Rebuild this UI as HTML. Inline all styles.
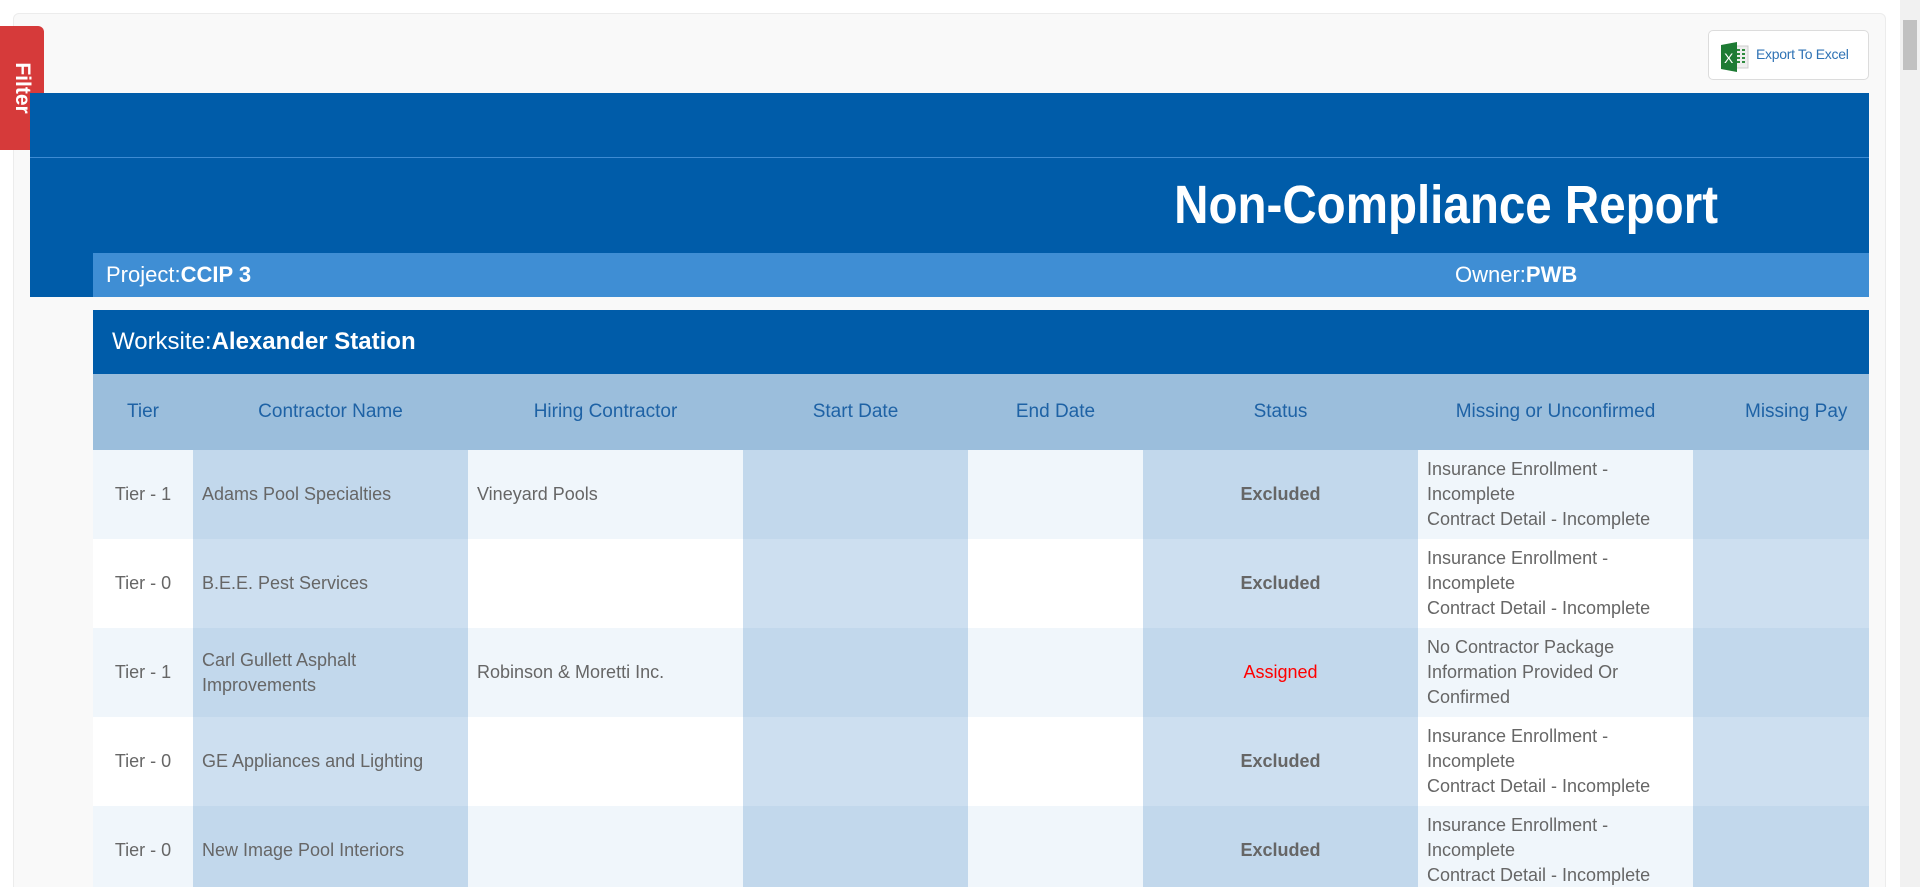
<!DOCTYPE html>
<html><head><meta charset="utf-8"><style>
*{box-sizing:border-box;margin:0;padding:0}
html,body{width:1920px;height:887px;overflow:hidden;background:#fff;font-family:"Liberation Sans",sans-serif}
.wrap{position:relative;width:1920px;height:887px;overflow:hidden}
.panel{position:absolute;left:13px;top:13px;width:1873px;height:900px;background:#f9f9f9;border:1px solid #ececec;border-radius:6px}
.filter{position:absolute;left:0;top:26px;width:44px;height:124px;background:#d63a3a;border-radius:0 6px 6px 0;color:#fff;font-weight:bold;font-size:21px}
.filter span{position:absolute;left:50%;top:50%;transform:translate(-50%,-50%) rotate(90deg);white-space:nowrap}
.export{position:absolute;left:1708px;top:30px;width:161px;height:50px;background:#fff;border:1px solid #dcdcdc;border-radius:5px;color:#2f73b5;font-size:14px}
.export svg{position:absolute;left:10px;top:10px}
.export span{position:absolute;left:47px;top:15px;letter-spacing:-0.3px}
.band{position:absolute;left:30px;top:93px;width:1839px;height:204px;background:#005ca9}
.sep{position:absolute;left:30px;top:157px;width:1839px;height:1px;background:#3d8bd3}
.title{position:absolute;right:202px;top:172px;white-space:nowrap;color:#fff;font-weight:bold;font-size:54px;line-height:66px;transform:scaleX(0.88);transform-origin:right center}
.proj{position:absolute;left:93px;top:253px;width:1776px;height:44px;background:#3f8ed4;color:#fff;font-size:22px;line-height:44px}
.ws{position:absolute;left:93px;top:310px;width:1776px;height:64px;background:#005ca9;color:#fff;font-size:24px;line-height:64px;padding-left:19px}
table{position:absolute;left:93px;top:374px;border-collapse:collapse;table-layout:fixed;width:1776px}
th{height:76px;background:#9bbedc;color:#1e62a5;font-size:19px;font-weight:normal;text-align:center;white-space:nowrap;overflow:hidden}
td{height:89px;color:#666;font-size:18px;line-height:25px;padding:0 9px;vertical-align:middle}
tr.o td{background:#f0f6fb}tr.o td.d{background:#c2d8ec}
tr.e td{background:#fff}tr.e td.d{background:#cddff0}
td.c{text-align:center}
td.s{text-align:center;font-weight:bold}
.red{color:#f00;font-weight:normal}
.sb{position:absolute;left:1900px;top:0;width:20px;height:887px;background:#f1f1f1}
.thumb{position:absolute;left:1903px;top:20px;width:14px;height:50px;background:#c1c1c1}
</style></head><body><div class="wrap">
<div class="panel"></div>
<div class="filter"><span>Filter</span></div>
<div class="export"><svg width="32" height="32" viewBox="0 0 32 32"><rect x="14" y="5" width="15" height="22" fill="#eee" stroke="#ccc"/><g fill="#2e8b3e"><rect x="18" y="8" width="3" height="2"/><rect x="23" y="8" width="3" height="2"/><rect x="18" y="12" width="3" height="2"/><rect x="23" y="12" width="3" height="2"/><rect x="18" y="16" width="3" height="2"/><rect x="23" y="16" width="3" height="2"/><rect x="18" y="20" width="3" height="2"/><rect x="23" y="20" width="3" height="2"/></g><path d="M2 4 L18 1 L18 31 L2 28 Z" fill="#1e7b34"/><text x="5" y="22" fill="#fff" font-size="14" font-family="Liberation Sans">X</text></svg><span>Export To Excel</span></div>
<div class="band"></div><div class="sep"></div>
<div class="title">Non-Compliance Report</div>
<div class="proj"><span style="position:absolute;left:13px">Project:<b>CCIP 3</b></span><span style="position:absolute;left:1362px">Owner:<b>PWB</b></span></div>
<div class="ws">Worksite:<b>Alexander Station</b></div>
<table>
<colgroup><col style="width:100px"><col style="width:275px"><col style="width:275px"><col style="width:225px"><col style="width:175px"><col style="width:275px"><col style="width:275px"><col style="width:176px"></colgroup>
<tr><th>Tier</th><th>Contractor Name</th><th>Hiring Contractor</th><th>Start Date</th><th>End Date</th><th>Status</th><th>Missing or Unconfirmed</th><th style="text-align:left;padding-left:52px">Missing Pay</th></tr>
<tr class="o"><td class="c">Tier - 1</td><td class="d">Adams Pool Specialties</td><td>Vineyard Pools</td><td class="d"></td><td></td><td class="d s">Excluded</td><td>Insurance Enrollment - Incomplete<br>Contract Detail - Incomplete</td><td class="d"></td></tr>
<tr class="e"><td class="c">Tier - 0</td><td class="d">B.E.E. Pest Services</td><td></td><td class="d"></td><td></td><td class="d s">Excluded</td><td>Insurance Enrollment - Incomplete<br>Contract Detail - Incomplete</td><td class="d"></td></tr>
<tr class="o"><td class="c">Tier - 1</td><td class="d">Carl Gullett Asphalt Improvements</td><td>Robinson &amp; Moretti Inc.</td><td class="d"></td><td></td><td class="d s"><span class="red">Assigned</span></td><td>No Contractor Package Information Provided Or Confirmed</td><td class="d"></td></tr>
<tr class="e"><td class="c">Tier - 0</td><td class="d">GE Appliances and Lighting</td><td></td><td class="d"></td><td></td><td class="d s">Excluded</td><td>Insurance Enrollment - Incomplete<br>Contract Detail - Incomplete</td><td class="d"></td></tr>
<tr class="o"><td class="c">Tier - 0</td><td class="d">New Image Pool Interiors</td><td></td><td class="d"></td><td></td><td class="d s">Excluded</td><td>Insurance Enrollment - Incomplete<br>Contract Detail - Incomplete</td><td class="d"></td></tr>
</table>
<div class="sb"></div><div class="thumb"></div>
</div></body></html>
